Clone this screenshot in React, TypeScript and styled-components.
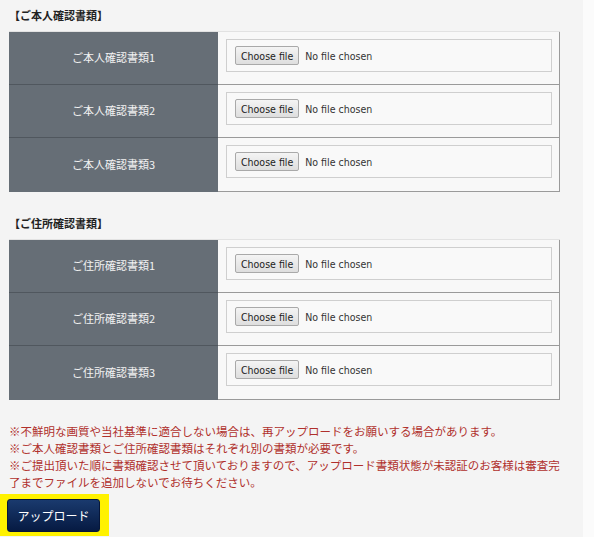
import styled, { createGlobalStyle } from 'styled-components'

const GlobalStyle = createGlobalStyle`
  html, body {
    margin: 0;
    padding: 0;
    background: #fbfbfb;
  }
  body {
    font-family: "Noto Sans CJK JP", "DejaVu Sans", sans-serif;
  }
`

const identityDocs = ['ご本人確認書類1', 'ご本人確認書類2', 'ご本人確認書類3']
const addressDocs = ['ご住所確認書類1', 'ご住所確認書類2', 'ご住所確認書類3']

const notes = [
  '※不鮮明な画質や当社基準に適合しない場合は、再アップロードをお願いする場合があります。',
  '※ご本人確認書類とご住所確認書類はそれぞれ別の書類が必要です。',
  '※ご提出頂いた順に書類確認させて頂いておりますので、アップロード書類状態が未認証のお客様は審査完了までファイルを追加しないでお待ちください。',
]

const UploadTable = ({ labels }: { labels: string[] }) => (
  <Table>
    {labels.map((label) => (
      <Row key={label}>
        <LabelCell>{label}</LabelCell>
        <ValueCell>
          <FileBox>
            <ChooseButton type="button">Choose file</ChooseButton>
            <FileStatus>No file chosen</FileStatus>
          </FileBox>
        </ValueCell>
      </Row>
    ))}
  </Table>
)

export default function App() {
  return (
    <>
      <GlobalStyle />
      <Page>
        <Heading>【ご本人確認書類】</Heading>
        <UploadTable labels={identityDocs} />

        <Heading $spaced>【ご住所確認書類】</Heading>
        <UploadTable labels={addressDocs} />

        <Notes>
          {notes.map((note) => (
            <p key={note}>{note}</p>
          ))}
        </Notes>

        <Highlight>
          <UploadButton type="button">アップロード</UploadButton>
        </Highlight>
      </Page>
    </>
  )
}

const Page = styled.main`
  width: 583px;
  height: 537px;
  box-sizing: border-box;
  padding: 7px 0 0 9px;
  background: #f4f4f4;
  overflow: hidden;
`

const Heading = styled.h3<{ $spaced?: boolean }>`
  margin: ${({ $spaced }) => ($spaced ? '23px' : '0')} 0 8px 0;
  font-size: 11px;
  line-height: 16px;
  font-weight: bold;
  color: #222;
`

const Table = styled.div`
  width: 551px;
  border-top: 1px solid #e2e2e2;
`

const Row = styled.div`
  display: grid;
  grid-template-columns: 209px 1fr;
  height: 53px;

  &:last-child {
    height: 54px;
  }
`

const LabelCell = styled.div`
  display: flex;
  align-items: center;
  justify-content: center;
  padding-bottom: 2px;
  background: #666e76;
  border-bottom: 1px solid #50575e;
  color: #f2f2f2;
  font-size: 11px;

  ${Row}:last-child & {
    border-bottom-color: #666e76;
  }
`

const ValueCell = styled.div`
  box-sizing: border-box;
  padding: 7px 7px 12px 8px;
  background: #f8f8f8;
  border-right: 1px solid #9a9a9a;
  border-bottom: 1px solid #9a9a9a;
`

const FileBox = styled.div`
  box-sizing: border-box;
  height: 33px;
  display: flex;
  align-items: center;
  gap: 6px;
  padding: 0 8px;
  background: #f9f9f9;
  border: 1px solid #cfcfcf;
`

const ChooseButton = styled.button`
  height: 19px;
  padding: 0 5px;
  border: 1px solid #a9a9a9;
  border-radius: 2px;
  background: linear-gradient(#f4f4f4, #dedede);
  font-family: "DejaVu Sans Condensed", "DejaVu Sans", sans-serif;
  font-size: 10.5px;
  color: #222;
`

const FileStatus = styled.span`
  font-family: "DejaVu Sans Condensed", "DejaVu Sans", sans-serif;
  font-size: 10.5px;
  color: #333;
`

const Notes = styled.div`
  width: 560px;
  margin-top: 23px;
  color: #b0302c;
  font-size: 11.5px;
  line-height: 17px;

  p {
    margin: 0;
  }
`

const Highlight = styled.div`
  display: inline-block;
  margin: 3px 0 0 -9px;
  padding: 5px 9px 4px 7px;
  background: #fff200;
`

const UploadButton = styled.button`
  display: block;
  width: 93px;
  height: 33px;
  border: 1px solid #06163a;
  border-radius: 3px;
  background: linear-gradient(#1a3a6e, #061a42);
  color: #fff;
  font-family: "Noto Sans CJK JP", sans-serif;
  font-size: 12px;
`
